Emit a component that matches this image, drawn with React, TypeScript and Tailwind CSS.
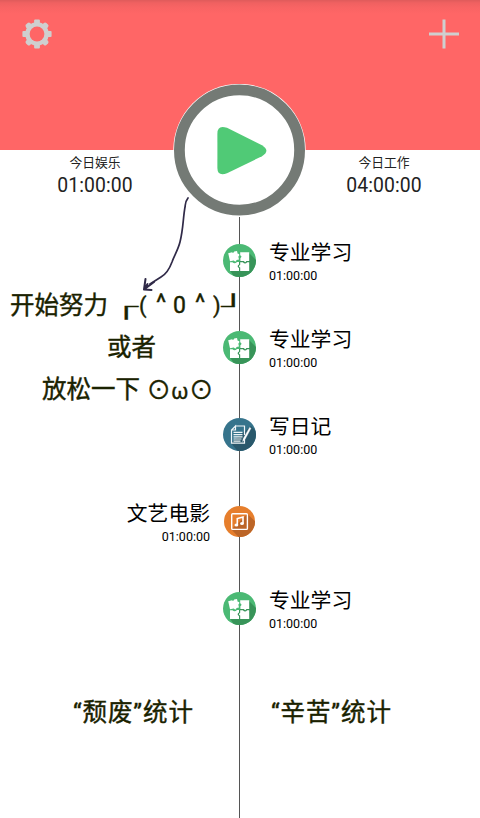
import React from "react";

type Kind = "study" | "diary" | "movie";
type Entry = { title: string; time: string; kind: Kind; side: "left" | "right" };

const entries: Entry[] = [
  { title: "专业学习", time: "01:00:00", kind: "study", side: "right" },
  { title: "专业学习", time: "01:00:00", kind: "study", side: "right" },
  { title: "写日记", time: "01:00:00", kind: "diary", side: "right" },
  { title: "文艺电影", time: "01:00:00", kind: "movie", side: "left" },
  { title: "专业学习", time: "01:00:00", kind: "study", side: "right" },
];

function GearIcon() {
  return (
    <svg className="h-[30px] w-[30px]" viewBox="-15 -15 30 30" fill="#cfcfcf">
      <mask id="gearHole" maskUnits="userSpaceOnUse" x="-15" y="-15" width="30" height="30">
        <rect x="-15" y="-15" width="30" height="30" fill="white" />
        <circle r="7.4" fill="black" />
      </mask>
      <g mask="url(#gearHole)">
        <circle r="11.8" />
        <rect x="-2.9" y="-14.6" width="5.8" height="29.2" rx="1" />
        <rect x="-14.6" y="-2.9" width="29.2" height="5.8" rx="1" />
        <rect x="-2.9" y="-14.4" width="5.8" height="28.8" rx="1.8" transform="rotate(45)" />
        <rect x="-2.9" y="-14.4" width="5.8" height="28.8" rx="1.8" transform="rotate(-45)" />
      </g>
    </svg>
  );
}

function PlusIcon() {
  return (
    <svg className="h-[30px] w-[30px]" viewBox="0 0 30 30" stroke="#cfcfcf" strokeWidth="3">
      <path d="M15 .5V29.5M0 15H30" />
    </svg>
  );
}

function StudyIcon() {
  return (
    <svg className="h-[33px] w-[33px]" viewBox="0 0 33 33">
      <clipPath id="studyClip"><circle cx="16.5" cy="16.5" r="16.5" /></clipPath>
      <g clipPath="url(#studyClip)">
        <path fill="#4bb974" d="M0 0H33V33H0z" />
        <path fill="#389459" d="M26 9L42 25V42H17L7 26.5z" />
      </g>
      <path fill="#fff" d="M5.2 9.2L9 8.2Q10.5 9.5 11.2 7.5L14 6.9L14.7 9.8Q17 9.6 16 12L15.3 12.6L16 15.6L13.5 16Q12.8 18.8 10.8 16.5L7 17.2z" />
      <path fill="#fff" d="M17.2 8.3H26.2V17H23.4Q22.3 19.3 20.8 17H17.4V14.2Q19.6 12.4 17.2 11.2z" />
      <path fill="#fff" d="M7 18.2H9.5Q11.6 20.6 14 18H16V20.4Q13.3 22 16 24V27H7z" />
      <path fill="#fff" d="M17.2 18.2H19.9Q22 21 24.2 18.2H26.2V27H17.2V23.6Q14.8 22.2 17.2 20.7z" />
    </svg>
  );
}

function DiaryIcon() {
  return (
    <svg className="h-[33px] w-[33px]" viewBox="0 0 33 33">
      <clipPath id="diaryClip"><circle cx="16.5" cy="16.5" r="16.5" /></clipPath>
      <g clipPath="url(#diaryClip)">
        <path fill="#36748c" d="M0 0H33V33H0z" />
        <path fill="#29586b" d="M28 8L42 22V42H22L8 25z" />
      </g>
      <g fill="none" stroke="#f1f6f8" strokeWidth="1.2">
        <path d="M12.3 8H21.5V17M21.5 22V25.2H8.5V12L12.5 8V12H8.5" />
        <path d="M10.5 14.4H19.5M10.5 16.6H19.5M10.5 18.8H19.5M10.5 21H18.5M10.5 23.1H17.5" />
        <path d="M26.6 9.4L28 10.2L21.8 21.8L19.6 23.6L20.2 20.8z" fill="#fff" strokeWidth=".4" />
      </g>
    </svg>
  );
}

function MovieIcon() {
  return (
    <svg className="h-[31px] w-[31px]" viewBox="0 0 31 31">
      <clipPath id="movieClip"><circle cx="15.5" cy="15.5" r="15.5" /></clipPath>
      <g clipPath="url(#movieClip)">
        <path fill="#e67e2c" d="M0 0H31V31H0z" />
        <path fill="#bc6527" d="M23.5 8L40 24V40H23L7.5 23.5z" />
      </g>
      <rect x="7.7" y="7.7" width="15.7" height="15.7" rx="1" fill="none" stroke="#fff" strokeWidth="1.4" />
      <path d="M13.3 19V12.5L19 11V17.5" fill="none" stroke="#fff" strokeWidth="1.6" />
      <ellipse cx="12.4" cy="19" rx="1.9" ry="1.5" fill="#fff" />
      <ellipse cx="18" cy="17.6" rx="1.9" ry="1.5" fill="#fff" />
    </svg>
  );
}

const icons: Record<Kind, () => React.ReactElement> = { study: StudyIcon, diary: DiaryIcon, movie: MovieIcon };

function Label({ entry }: { entry: Entry }) {
  const left = entry.side === "left";
  return (
    <div className={left ? "flex flex-col items-end pr-[13px] pt-[23px]" : "col-start-3 flex flex-col items-start pl-[13px] pt-[23px]"}>
      <span className="text-[20.8px] leading-[26px] text-black">{entry.title}</span>
      <span className="text-[12.5px] leading-[20px] text-black">{entry.time}</span>
    </div>
  );
}

function Row({ entry }: { entry: Entry }) {
  const Icon = icons[entry.kind];
  return (
    <li className="grid h-[87px] grid-cols-[223px_33px_224px] grid-rows-1">
      {entry.side === "left" && <Label entry={entry} />}
      <div className="col-start-2 row-start-1 flex items-center justify-center"><Icon /></div>
      {entry.side === "right" && <Label entry={entry} />}
    </li>
  );
}

function Total({ label, value }: { label: string; value: string }) {
  return (
    <div className="flex w-[190px] flex-col items-center pt-[3px] text-[#222]">
      <span className="text-[12.8px] leading-[19px]">{label}</span>
      <span className="text-[19.4px] leading-[28px] tracking-[0.1px]">{value}</span>
    </div>
  );
}

const noteStyle = "whitespace-nowrap text-[24.5px] leading-[42px] text-[#1a2200] [-webkit-text-stroke:0.4px_#1a2200]";

export default function App() {
  return (
    <main className="relative flex h-[818px] w-[480px] flex-col overflow-hidden bg-white font-['Roboto','Noto_Sans_CJK_SC',sans-serif]">
      <header className="flex h-[150px] items-start justify-between bg-[#ff6666] bg-[linear-gradient(to_bottom,#df5b5b_0px,#f06161_3px,#f96464_8px,#ff6666_14px)] pl-[21.5px] pr-[21px] pt-[18.5px]">
        <GearIcon />
        <PlusIcon />
      </header>
      <section className="flex h-[67px] justify-between">
        <Total label="今日娱乐" value="01:00:00" />
        <div className="mr-[1px]"><Total label="今日工作" value="04:00:00" /></div>
      </section>
      <section className="flex flex-1 flex-col bg-[linear-gradient(#555,#555)] bg-[length:1px_100%] bg-[position:239px_0px] bg-no-repeat">
        <ul>
          {entries.map((entry, i) => <Row key={i} entry={entry} />)}
        </ul>
        <div className="flex pt-[40px]">
          <div className={`${noteStyle} w-[271px] pl-[73px] tracking-[0.9px]`}>“颓废”统计</div>
          <div className={`${noteStyle} tracking-[0.9px]`}>“辛苦”统计</div>
        </div>
      </section>

      <button className="absolute left-[173px] top-[84px] h-[133px] w-[133px]" aria-label="开始">
        <svg viewBox="0 0 133 133">
          <circle cx="66.5" cy="66" r="66.2" fill="#fff" />
          <circle cx="66.5" cy="66" r="60.1" fill="#fff" stroke="#747a75" strokeWidth="10.8" />
          <path d="M44.4 49.5Q44.4 40.4 54 43.8L89 61.2Q97.8 66.8 89 72.2L54 89.3Q44.4 92.5 44.4 84z" fill="#50ca76" />
        </svg>
      </button>

      <div className="pointer-events-none absolute left-0 top-[191px] w-[260px]">
        <svg className="h-[94px] w-[250px]" viewBox="0 1 250 94" fill="none" stroke="#302a48" strokeLinecap="round" strokeLinejoin="round">
          <path strokeWidth="1.7" d="M188 8Q185 12 185.2 16C183 27 183.5 38 180 52C178 60 174 66 172 72Q168 83 161 87L150 94" />
        </svg>
        <svg className="absolute left-[140px] top-[84px] h-[18px] w-[24px]" viewBox="0 0 24 18" fill="none" stroke="#302a48" strokeLinecap="round" strokeLinejoin="round">
          <path strokeWidth="2" d="M14 7L4 14.5L5.5 4M4 14.5L11.5 15M4 14.5L7.5 9" />
        </svg>
        <div className="flex">
          <div className={`${noteStyle} w-[114px] pl-[10px]`}>开始努力</div>
          <div className={`${noteStyle} flex`}>
            <span className="w-[25px] font-['Noto_Sans_CJK_SC']">┎</span>
            <span className="w-[17px] text-[22px]">(</span>
            <span className="-mt-[3px] w-[17px]">^</span>
            <span className="w-[22px] text-[23px]">0</span>
            <span className="-mt-[3px] w-[18px]">^</span>
            <span className="w-[8px] text-[22px]">)</span>
            <span className="w-[24px] font-['Noto_Sans_CJK_SC']">┚</span>
          </div>
        </div>
        <div className={`${noteStyle} pl-[107px]`}>或者</div>
        <div className={`${noteStyle} flex pl-[42px]`}>
          <span className="w-[104.5px]">放松一下</span>
          <span className="-mt-[1px] w-[24.5px] font-['Noto_Sans_CJK_SC']">⊙</span>
          <span className="w-[18px] font-['Noto_Sans'] text-[22px]">ω</span>
          <span className="-mt-[1px] font-['Noto_Sans_CJK_SC']">⊙</span>
        </div>
      </div>
    </main>
  );
}
